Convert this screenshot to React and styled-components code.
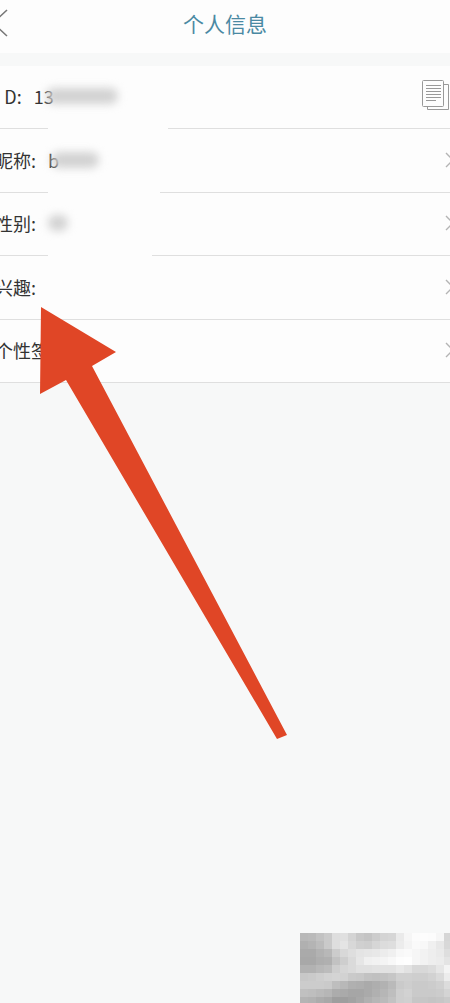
import React from "react";
import styled, { createGlobalStyle } from "styled-components";

const ROWS = [
  { id: "uid", label: "I D:", shown: "13", smudge: 72, cover: 120, copy: true },
  { id: "nickname", label: "昵称:", shown: "b", smudge: 48, cover: 112 },
  { id: "gender", label: "性别:", shown: "", smudge: 20, cover: 104 },
  { id: "interest", label: "兴趣:" },
  { id: "signature", label: "个性签名:" },
];

// grey levels of the pixelated corner, one line per strip, 8px cells
const MOSAIC = [
  [184, 186, 194, 202, 222, 224, 212, 200, 196, 204, 212, 214, 234, 246, 252, 253, 252, 246, 214],
  [176, 180, 188, 202, 222, 228, 216, 208, 206, 214, 220, 222, 236, 244, 250, 248, 240, 232, 216],
  [170, 170, 178, 184, 204, 216, 222, 228, 230, 232, 236, 240, 248, 250, 246, 242, 238, 234, 222],
  [168, 168, 174, 176, 194, 206, 218, 230, 240, 242, 244, 248, 253, 254, 246, 242, 238, 236, 228],
  [178, 178, 184, 188, 206, 214, 218, 224, 224, 226, 226, 226, 232, 226, 216, 216, 220, 230, 244],
  [200, 202, 206, 210, 212, 210, 202, 200, 194, 192, 194, 198, 208, 208, 206, 206, 210, 218, 236],
  [204, 204, 204, 202, 190, 184, 176, 174, 170, 174, 178, 186, 202, 206, 202, 202, 204, 208, 220],
  [192, 190, 186, 182, 172, 170, 166, 166, 170, 176, 182, 190, 206, 210, 202, 202, 202, 204, 212],
  [180, 178, 172, 168, 158, 158, 162, 168, 176, 182, 186, 194, 206, 208, 198, 198, 196, 198, 202],
];

const App = () => {
  return (
    <>
      <GlobalStyle />
      <Page>
        <Header>
          <BackButton type="button" aria-label="返回">
            <svg width="12" height="28" viewBox="0 0 12 28" fill="none">
              <path d="M11 1 L-3 14 L11 27" stroke="#777" strokeWidth="1.6" />
            </svg>
          </BackButton>
          <Title>个人信息</Title>
        </Header>

        <List>
          {ROWS.map((row) => (
            <Row key={row.id}>
              <Label>{row.label}</Label>
              {row.cover && <Cover $width={row.cover} />}
              {row.smudge && (
                <Value>
                  {row.shown}
                  <Smudge $width={row.smudge} $overlap={Boolean(row.shown)} />
                </Value>
              )}
              {row.copy ? (
                <IconButton type="button" aria-label="复制">
                  <CopyIcon />
                </IconButton>
              ) : (
                <IconButton type="button" aria-label={row.label}>
                  <svg width="5" height="18" viewBox="0 0 5 18" fill="none">
                    <path d="M1 2 L8 9 L1 16" stroke="#b4b4b4" strokeWidth="1.4" />
                  </svg>
                </IconButton>
              )}
            </Row>
          ))}
        </List>

        <Arrow viewBox="0 0 248 433" aria-hidden="true">
          <path
            d="M1 0 L76 45 L52 59 L247 428 L237 432 L26 73 L0 87 Z"
            fill="#e04626"
          />
        </Arrow>

        <Mosaic viewBox="0 0 150 70" aria-hidden="true">
          {MOSAIC.map((line, y) =>
            line.map((grey, x) => (
              <rect
                key={`${x}-${y}`}
                x={x * 8}
                y={y * 8}
                width="8"
                height="8"
                fill={`rgb(${grey}, ${grey}, ${grey})`}
                shapeRendering="crispEdges"
              />
            ))
          )}
        </Mosaic>
      </Page>
    </>
  );
};

const CopyIcon = () => (
  <svg width="28" height="32" viewBox="0 0 28 32" fill="none" stroke="#999">
    <path d="M22 4.5 H26.5 V29.5 H5.5 V27" />
    <rect x="0.5" y="0.5" width="21" height="26" rx="1" fill="#fdfdfd" />
    <path d="M4 5.5 H19 M4 8.5 H19 M4 11.5 H19 M4 14.5 H19 M4 17.5 H19 M4 20.5 H14" />
  </svg>
);

// ################### STYLED COMPONENTS ######################

const GlobalStyle = createGlobalStyle`
  * {
    box-sizing: border-box;
  }

  body {
    margin: 0;
    background: #f7f8f8;
    font-family: "Noto Sans CJK SC", sans-serif;
  }
`;

const Page = styled.main`
  position: relative;
  min-height: 100vh;
  overflow: hidden;
`;

const Header = styled.header`
  display: grid;
  grid-template-columns: 12px 1fr 12px;
  align-items: center;
  height: 53px;
  padding-bottom: 8px;
  background: #fdfdfd;
`;

const BackButton = styled.button`
  display: flex;
  padding: 0;
  border: none;
  background: transparent;
  margin-left: -4px;
  cursor: pointer;
`;

const Title = styled.h1`
  margin: 0;
  text-align: center;
  font-size: 21px;
  font-weight: 400;
  line-height: 30px;
  color: #4a89a3;
`;

const List = styled.ul`
  margin: 13px 0 0;
  padding: 0;
  list-style: none;
`;

const Row = styled.li`
  position: relative;
  display: flex;
  align-items: center;
  height: 63px;
  padding-bottom: 2px;
  border-bottom: 1px solid #dfdfdf;
  background: #fdfdfd;
  color: #333;
  font-size: 18px;
  line-height: 26px;

  &:nth-child(even) {
    height: 64px;
  }
`;

const Label = styled.span`
  margin-left: -5px;
  white-space: nowrap;
`;

// hides the divider under a smudged value
const Cover = styled.span`
  position: absolute;
  left: 48px;
  top: 0;
  bottom: -1px;
  width: ${(p) => p.$width}px;
  background: #fdfdfd;
`;

const Value = styled.span`
  position: relative;
  display: flex;
  align-items: center;
  margin-left: 12px;
`;

const Smudge = styled.span`
  width: ${(p) => p.$width}px;
  height: 16px;
  margin-left: ${(p) => (p.$overlap ? "-8px" : "0")};
  border-radius: 8px;
  background: #d2d2d2;
  filter: blur(4px);
`;

const IconButton = styled.button`
  display: flex;
  margin-left: auto;
  padding: 0;
  border: none;
  background: transparent;
  cursor: pointer;
`;

const Arrow = styled.svg`
  position: absolute;
  left: 40px;
  top: 307px;
  width: 248px;
  pointer-events: none;
`;

const Mosaic = styled.svg`
  position: absolute;
  right: 0;
  bottom: 0;
  width: 150px;
`;

export default App;
